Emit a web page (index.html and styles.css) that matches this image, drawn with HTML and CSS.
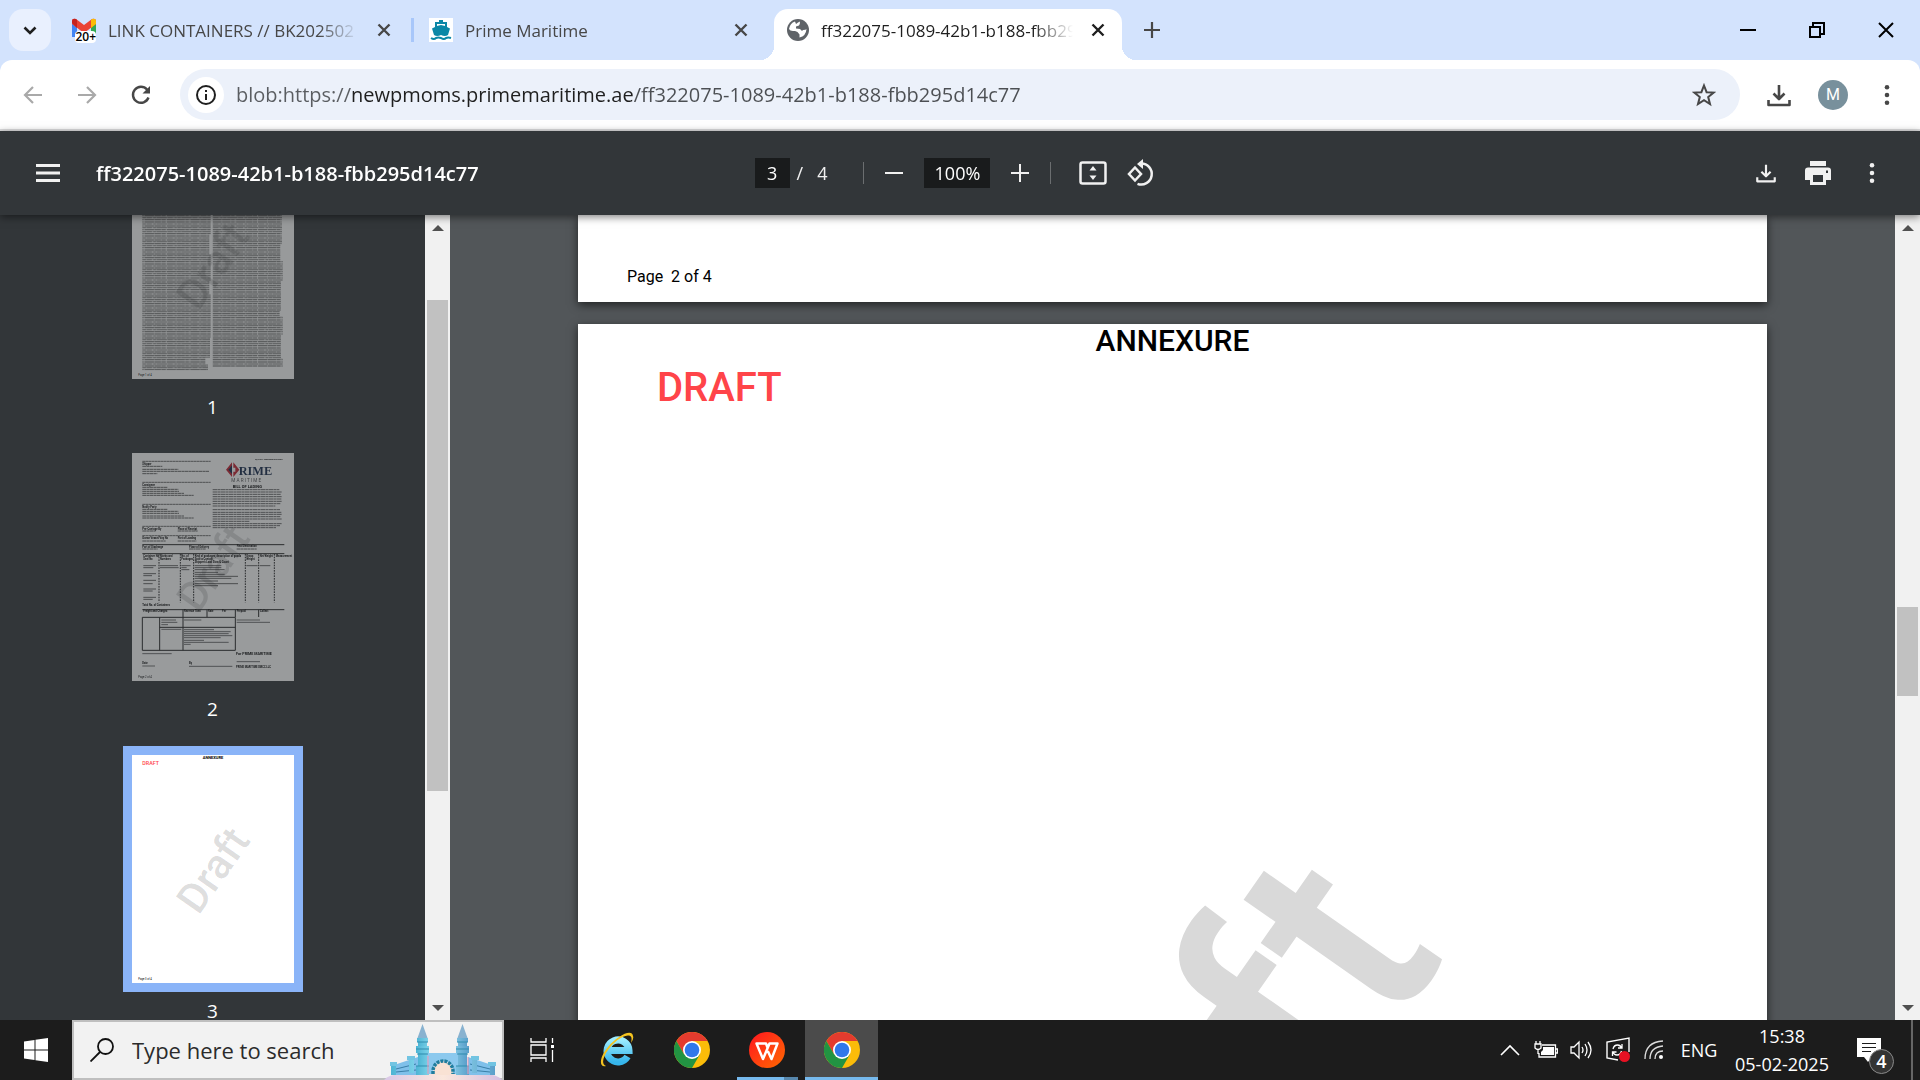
FILE: index.html
```html
<!DOCTYPE html>
<html lang="en">
<head>
<meta charset="utf-8">
<title>ff322075-1089-42b1-b188-fbb295d14c77</title>
<link rel="stylesheet" href="styles.css">
</head>
<body>
<svg class="defs" aria-hidden="true">
  <symbol id="close" viewBox="0 0 24 24"><path d="M6.500 6.500l11 11M17.500 6.500l-11 11" fill="none" stroke="currentColor" stroke-width="2.400"/></symbol>
  <symbol id="download" viewBox="0 0 24 24"><path d="M12 2v14M6.500 10.500L12 16l5.500-5.500M1.500 17v5h21v-5" fill="none" stroke="currentColor" stroke-width="2.600" stroke-linejoin="round"/></symbol>
  <symbol id="dots" viewBox="0 0 24 24"><g fill="currentColor"><circle cx="12" cy="3.500" r="2.500"/><circle cx="12" cy="12" r="2.500"/><circle cx="12" cy="20.500" r="2.500"/></g></symbol>
  <symbol id="chrome" viewBox="0 0 36 36">
    <circle cx="18" cy="18" r="18" fill="#fbbc09"/>
    <path d="M2.400 9A18 18 0 0 1 33.600 9H18L10.200 22.500z" fill="#e33b2e"/>
    <path d="M2.400 9A18 18 0 0 0 18 36l7.800-13.500L18 18l-7.800 4.500z" fill="#229342"/>
    <circle cx="18" cy="18" r="9" fill="#fff"/><circle cx="18" cy="18" r="7.300" fill="#2f78ea"/>
  </symbol>
</svg>

<header>
  <div class="tabstrip">
    <button class="tab-search" aria-label="Search tabs"><svg width="24" height="24" viewBox="0 0 24 24"><path d="M6.500 9.500L12 15l5.500-5.500" fill="none" stroke="#1f1f1f" stroke-width="2.600"/></svg></button>
    <div class="tab tab-first">
      <span class="favicon">
        <svg width="24" height="24" viewBox="0 0 24 24"><path d="M0 5v14h5V8z" fill="#4285f4"/><path d="M24 5v14h-5V8z" fill="#34a853"/><path d="M0 6V3q0-3 4-2l8 6 8-6q4-1 4 2v3l-12 9z" fill="#ea4335"/><path d="M0 5V3q0-3 4-2l1 1v8z" fill="#c5221f"/><path d="M24 6V3q0-3-4-2l-1 1v8z" fill="#fbbc04"/></svg>
        <span class="unread">20+</span>
      </span>
      <span class="tab-title">LINK CONTAINERS // BK202502</span>
      <button class="plain" aria-label="Close tab"><svg width="24" height="24"><use href="#close"/></svg></button>
    </div>
    <div class="tab tab-second">
      <span class="favicon ship"><svg width="24" height="24" viewBox="0 0 24 24"><path d="M10 2h4v2h4v5l3 1.500L19 17q-3 2-7 0-4 2-7 0L3 10.500 6 9V4h4z" fill="#0b87a6"/><path d="M8 6h8v2l-4-1-4 1z" fill="#fff"/><path d="M2 20q3 2 5 0 2-1 5 0 3 2 5 0 2-1 5 0" fill="none" stroke="#0b87a6" stroke-width="2"/></svg></span>
      <span class="tab-title">Prime Maritime</span>
      <button class="plain" aria-label="Close tab"><svg width="24" height="24"><use href="#close"/></svg></button>
    </div>
    <div class="tab tab-active">
      <svg width="22" height="22" viewBox="0 0 22 22"><circle cx="11" cy="11" r="11" fill="#5f6368"/><path d="M2 10q1-6 6-7.500L9 5q2-2 4-2.500 0 3-1 4l-3 1v2l4 .5 2 2 1-1q3 0 3.500-1-.500 7-7 8.500v-3l-2-2.500-2.500-1L6 12q-3 0-4-2z" fill="#fff"/></svg>
      <span class="tab-title">ff322075-1089-42b1-b188-fbb295d14c77</span>
      <button class="plain" aria-label="Close tab"><svg width="24" height="24"><use href="#close"/></svg></button>
    </div>
    <button class="plain new-tab" aria-label="New tab"><svg width="24" height="24" viewBox="0 0 24 24"><path d="M12 4v16M4 12h16" fill="none" stroke="#474747" stroke-width="2.200"/></svg></button>
    <div class="window-buttons">
      <button class="plain" aria-label="Minimize"><svg width="16" height="16"><path d="M0 8h16" stroke="#000" stroke-width="2"/></svg></button>
      <button class="plain" aria-label="Restore"><svg width="16" height="16"><path d="M1 5h10v10H1zM4 4V1h11v11h-3" fill="none" stroke="#000" stroke-width="2"/></svg></button>
      <button class="plain" aria-label="Close"><svg width="16" height="16"><path d="M1 1l14 14M15 1L1 15" stroke="#000" stroke-width="2"/></svg></button>
    </div>
  </div>

  <div class="navbar">
    <button class="plain nav faded" aria-label="Back"><svg width="24" height="24" viewBox="0 0 24 24"><path d="M21 12H4M12 4l-8 8 8 8" fill="none" stroke="currentColor" stroke-width="2.200"/></svg></button>
    <button class="plain nav faded" aria-label="Forward"><svg width="24" height="24" viewBox="0 0 24 24"><path d="M3 12h17M12 4l8 8-8 8" fill="none" stroke="currentColor" stroke-width="2.200"/></svg></button>
    <button class="plain nav" aria-label="Reload"><svg width="24" height="24" viewBox="0 0 24 24"><path d="M19.500 14.500A8 8 0 1 1 18 6.500L20 9" fill="none" stroke="currentColor" stroke-width="2.400"/><path d="M21 3v7.500h-7.500z" fill="currentColor"/></svg></button>
    <div class="omnibox">
      <button class="site-info" aria-label="View site information"><svg width="24" height="24" viewBox="0 0 24 24"><circle cx="12" cy="12" r="9" fill="none" stroke="#1f1f1f" stroke-width="2"/><path d="M12 11v6M12 7v2" stroke="#1f1f1f" stroke-width="2"/></svg></button>
      <input class="url" aria-label="Address" value="blob:https://newpmoms.primemaritime.ae/ff322075-1089-42b1-b188-fbb295d14c77">
      <button class="plain" aria-label="Bookmark this tab"><svg width="24" height="24" viewBox="0 0 24 24"><path d="M12 2.500l2.600 6.700 7 .4-5.400 4.500 1.800 7L12 17.200l-6 3.900 1.800-7-5.400-4.500 7-.4z" fill="none" stroke="#474747" stroke-width="2"/></svg></button>
    </div>
    <button class="plain nav" aria-label="Downloads"><svg width="24" height="24"><use href="#download"/></svg></button>
    <button class="plain nav" aria-label="Profile"><span class="avatar">M</span></button>
    <button class="plain nav" aria-label="Menu"><svg width="24" height="22"><use href="#dots"/></svg></button>
  </div>
</header>

<div class="pdf-toolbar">
  <div class="pdf-start">
    <button class="plain" aria-label="Toggle sidebar"><svg width="24" height="18"><path d="M0 1.500h24M0 9h24M0 16.500h24" stroke="currentColor" stroke-width="3"/></svg></button>
    <span class="pdf-name">ff322075-1089-42b1-b188-fbb295d14c77</span>
  </div>
  <div class="pdf-center">
    <input class="page-number" aria-label="Page number" value="3">
    <span class="slash">/</span><span class="page-count">4</span>
    <span class="rule"></span>
    <button class="plain" aria-label="Zoom out"><svg width="18" height="18"><path d="M0 9h18" stroke="currentColor" stroke-width="2"/></svg></button>
    <input class="zoom-level" aria-label="Zoom level" value="100%">
    <button class="plain" aria-label="Zoom in"><svg width="18" height="18"><path d="M0 9h18M9 0v18" stroke="currentColor" stroke-width="2"/></svg></button>
    <span class="rule"></span>
    <button class="plain fit" aria-label="Fit to page"><svg width="28" height="24" viewBox="0 0 28 24"><rect x="1.500" y="1.500" width="25" height="21" rx="2" fill="none" stroke="currentColor" stroke-width="2.500"/><path d="M10.500 9.500h7L14 5zM10.500 14.500h7L14 19z" fill="currentColor"/></svg></button>
    <button class="plain" aria-label="Rotate"><svg width="28" height="28" viewBox="0 0 28 28"><path d="M8 8.500l6 6.500-6 6.500L2 15zM14 4.500a10.500 10.500 0 1 1-3.500 20.300" fill="none" stroke="currentColor" stroke-width="2.500"/><path d="M10 5l6-5v10z" fill="currentColor"/></svg></button>
  </div>
  <div class="pdf-end">
    <button class="plain" aria-label="Download"><svg width="20" height="22" viewBox="0 0 24 26"><use href="#download" width="24" height="26"/></svg></button>
    <button class="plain" aria-label="Print"><svg width="26" height="24" viewBox="0 0 26 24"><path d="M5 0h16v5H5z" fill="currentColor"/><path fill-rule="evenodd" d="M3 6.500h20q3 0 3 3V19h-5v5H5v-5H0V9.500q0-3 3-3zM8 14v7h10v-7zM21 9.500v2.500h2V9.500z" fill="currentColor"/></svg></button>
    <button class="plain" aria-label="More actions"><svg width="24" height="22"><use href="#dots"/></svg></button>
  </div>
</div>

<div class="viewer">
  <nav class="sidebar" aria-label="Page thumbnails">
    <div class="thumb-list">
      <a class="thumb" href="#page1">
        <svg class="sheet dim" viewBox="0 0 486 684">
          <defs><pattern id="rows" width="137" height="42" patternUnits="userSpaceOnUse"><path d="M0 3h137M0 15h137M0 26h137M0 38h137" stroke="#1c1c1c" stroke-width="3" stroke-dasharray="21 1 13 2 29 1" opacity=".7"/><path d="M0 9h137M0 20h137M0 32h137" stroke="#1c1c1c" stroke-width="3" stroke-dasharray="9 1 33 1 17 2" opacity=".6"/></pattern></defs>
          <rect width="486" height="684" fill="#fff"/>
          <path d="M31 20H236V250h-4v60h4v80h-4v40h4v130h-2v60h-14v20h8v18H31zM242 20H450V280h-5v50h7v60h-5v90h-4v16h9v56h-5v70h5v26H242z" fill="url(#rows)"/>
          <text x="19" y="675" font-size="8">Page  1 of 4</text>
          <text class="mark" transform="translate(243 345) rotate(-55)">Draft</text>
        </svg>
        <span>1</span>
      </a>
      <a class="thumb" href="#page2">
        <svg class="sheet dim" viewBox="0 0 486 684">
          <rect width="486" height="684" fill="#fff"/>
          <g stroke="#222" fill="none">
            <path d="M31 25h205M31 88h205M31 154h205M31 220h205M31 248h205" stroke-width="2" stroke-dasharray="8 1"/>
            <path d="M31 40h60M31 49h108M31 55h200M31 62h45M31 103h76M31 109h108M31 115h110M31 121h126M31 127h154M31 169h76M31 175h108M31 181h110M31 189h126M31 195h154M31 234h40M137 234h60M31 264h70M137 264h56M31 288h46M171 288h50M314 288h60" stroke-width="3" stroke-dasharray="12 1 7 1" opacity=".7"/>
            <path d="M242 110h200M242 117h208M242 124h204M242 131h208M242 138h206M242 145h208M242 152h203M242 159h188M242 170h202M242 178h206M242 184h208M242 191h203M242 198h208M242 205h110M242 212h208M242 218h202M242 224h190" stroke-width="3" stroke-dasharray="14 1 8 1" opacity=".68"/>
            <path d="M31 275h426M31 302h426M31 470h426" stroke-width="3"/>
            <path d="M81 303v145M145 303v145M185 303v145M340 303v145M380 303v145M427 303v145" stroke-width="3" stroke-dasharray="5 3"/>
            <path d="M31 493h279v99H31zM83 493v99M153 470v122M83 523h227M225 470v22M310 470v22M380 470v22" stroke-width="3"/>
            <path d="M34 338h38M34 344h30M34 362h38M34 368h26M34 382h38M34 392h28M34 408h38M34 414h28M34 433h38M34 439h28M84 338h54M84 344h56M148 338h28M148 344h16M148 350h24M188 338h80M188 344h80M188 350h90M188 358h70M188 364h90M188 370h130M188 376h110M188 384h70M188 392h130M188 398h70M343 338h34M383 338h32" stroke-width="3" opacity=".7"/>
            <path d="M156 530h90M156 536h140M156 542h134M156 548h145M156 554h110M156 562h60M156 568h134M156 574h20M88 501h44M88 508h48M88 515h20M88 529h60M156 501h52M314 501h70M314 508h100M31 602h88M31 639h38M171 640h130M314 626h70" stroke-width="3" opacity=".65"/>
          </g>
          <g font-size="8" font-weight="700">
            <text x="370" y="21" font-size="7">B/L No. PMLDXBJEA2025</text>
            <text x="31" y="37">Shipper</text><text x="31" y="98">Consignee</text><text x="31" y="165">Notify Party</text>
            <text x="31" y="231">Pre-Carriage By</text><text x="137" y="231">Place of Receipt</text>
            <text x="31" y="258">Ocean Vessel/Voy No</text><text x="137" y="258">Port of Loading</text>
            <text x="31" y="285">Port of Discharge</text><text x="171" y="285">Place of Delivery</text><text x="314" y="283">Final Destination</text>
            <text x="34" y="312">Container No</text><text x="34" y="321">Seal No</text><text x="84" y="312">Marks and</text><text x="84" y="321">Numbers</text>
            <text x="148" y="312">No. of</text><text x="148" y="321">Packages</text><text x="188" y="312">Kind of packages, description of goods</text><text x="188" y="321">Said to Contain</text><text x="188" y="330">Shipper's Load Stow &amp; Count</text>
            <text x="343" y="312">Gross</text><text x="343" y="321">Weight</text><text x="383" y="312">Net Weight</text><text x="431" y="312">Measurement</text>
            <text x="31" y="459">Total No. of Containers</text><text x="34" y="478">Freight and Charges</text>
            <text x="156" y="478">Revenue Tons</text><text x="228" y="478">Rate</text><text x="270" y="478">Per</text><text x="314" y="478">Prepaid</text><text x="384" y="478">Collect</text>
            <text x="312" y="606" font-size="11">For PRIME MARITIME</text>
            <text x="31" y="634">Date</text><text x="171" y="634">By</text><text x="312" y="645">PRIME MARITIME DMCC LLC</text>
            <text x="302" y="105" font-size="12">BILL OF LADING</text>
          </g>
          <path d="M282 50l18-22v44zM322 50l-18 22V56h6V44h-6V28z" fill="#c4202f"/><path d="M289 50l11-13v26z" fill="#14284a"/>
          <text x="320" y="67" font-family="Liberation Serif" font-weight="700" font-size="37" fill="#14284a">RIME</text>
          <text x="298" y="88" font-size="14" fill="#555">M A R I T I M E</text>
          <text x="19" y="675" font-size="8">Page  2 of 4</text>
          <text class="mark" transform="translate(243 345) rotate(-55)">Draft</text>
        </svg>
        <span>2</span>
      </a>
      <a class="thumb current" href="#page3">
        <svg class="sheet" viewBox="0 0 486 684">
          <rect width="486" height="684" fill="#fff"/>
          <text x="243" y="12" text-anchor="middle" font-size="12" font-weight="700">ANNEXURE</text>
          <text x="31" y="30" font-size="16" font-weight="500" fill="#ff4449">DRAFT</text>
          <text x="19" y="675" font-size="8">Page  3 of 4</text>
          <text class="mark" transform="translate(243 345) rotate(-55)">Draft</text>
        </svg>
        <span>3</span>
      </a>
    </div>
  </nav>
  <div class="scrollbar" aria-hidden="true"><i class="up"></i><div class="track side-track"><b></b></div><i class="down"></i></div>
  <main class="document">
    <section class="page page-tail" id="page2"><p>Page  2 of 4</p></section>
    <section class="page page-full" id="page3">
      <h1>ANNEXURE</h1>
      <h2>DRAFT</h2>
      <div class="watermark">Draft</div>
    </section>
  </main>
  <div class="scrollbar" aria-hidden="true"><i class="up"></i><div class="track main-track"><b></b></div><i class="down"></i></div>
</div>

<footer class="taskbar">
  <button class="plain start" aria-label="Start"><svg width="24" height="24" viewBox="0 0 24 24"><path d="M0 3.500l10.500-1.500v9.500H0zM11.500 1.800L24 0v11.500H11.500zM0 12.500h10.500V22L0 20.500zM11.500 12.500H24V24l-12.500-1.800z" fill="#fff"/></svg></button>
  <div class="search">
    <svg width="24" height="24" viewBox="0 0 24 24"><circle cx="15.500" cy="8.500" r="7.500" fill="none" stroke="#111" stroke-width="1.800"/><path d="M10 14L0.500 23.500" stroke="#111" stroke-width="1.800"/></svg>
    <input aria-label="Search" placeholder="Type here to search">
    <svg class="castle" width="118" height="56" viewBox="0 0 118 56">
      <defs>
        <linearGradient id="stone"><stop offset="0" stop-color="#4db4d4"/><stop offset=".45" stop-color="#a5ecfa"/><stop offset="1" stop-color="#5a9fca"/></linearGradient>
        <linearGradient id="glow"><stop offset="0" stop-color="#d9c8e8"/><stop offset=".5" stop-color="#fbe7dc"/><stop offset="1" stop-color="#d5bfe2"/></linearGradient>
      </defs>
      <path d="M0 56q4-6 20-6h78q16 0 20 6z" fill="url(#glow)"/>
      <path d="M10 51V41l24-8v18zM108 51V41l-24-8v18z" fill="#7fc0ea"/><path d="M12 45l20-5M12 48l20-2M106 45l-20-5M106 48l-20-2" stroke="#397fa8" stroke-width="1"/>
      <path d="M40 29h38v21H40z" fill="#8cc9ee"/>
      <path d="M49 51v-4a10 10 0 0 1 20 0v4z" fill="#f9e2d4"/><path d="M49 50v-3a10 10 0 0 1 20 0v3" fill="none" stroke="#217d9d" stroke-width="3.500" stroke-dasharray="3 1"/>
      <path d="M7 41h5v10H7zM25 35h5v14h-5zM88 35h5v14h-5zM106 41h5v10h-5z" fill="url(#stone)"/><path d="M6 38h7v4H6zM23 32h8v4h-8zM87 32h8v4h-8zM104 38h8v4h-8z" fill="#72c4e2"/>
      <path d="M34 18h9v32h-9zM74 18h9v32h-9z" fill="url(#stone)"/>
      <path d="M38.500 0l5 14h-10zM78.500 0l5 14h-10z" fill="#88b2d0"/>
      <path d="M33 14h11v4H33zM73 14h11v4H73zM32 22h13v7H32zM72 22h13v7H72zM32 42h13v9H32zM72 42h13v9H72z" fill="url(#stone)"/>
      <path d="M33 18h11M73 18h11M32 25h13M72 25h13M33 30h11M73 30h11M32 42h13M72 42h13" stroke="#318dae" stroke-width="1"/>
      <path d="M44 32v18M84 33v17" stroke="#e69ab8" stroke-width="1.500" opacity=".7"/>
    </svg>
  </div>
  <button class="plain app" aria-label="Task view"><svg width="24" height="24"><path d="M1 0v4h15V0M1 24v-4h15v4M1 7h15v10H1zM22.500 0v5M22.500 12v12" fill="none" stroke="#fff" stroke-width="1.300"/><path d="M21 7h3v3h-3z" fill="#fff"/></svg></button>
  <button class="plain app" aria-label="Internet Explorer"><svg width="36" height="36" viewBox="0 0 36 36"><defs><linearGradient id="ie" x2="0" y2="1"><stop offset="0" stop-color="#9cecff"/><stop offset="1" stop-color="#36b5eb"/></linearGradient></defs><path d="M28.500 24.500A11 11 0 1 1 30 18.500H11" fill="none" stroke="url(#ie)" stroke-width="7"/><path d="M7 34C-1 36 1 24 9 15 18 4 33-4 34 4q1 3-2 7 2-8-3-7.500C22 4 14 11 9 18 4 25 2 32 7 34z" fill="#f4c320"/></svg></button>
  <button class="plain app" aria-label="Google Chrome"><svg width="36" height="36"><use href="#chrome"/></svg></button>
  <button class="plain app running" aria-label="WPS Office"><svg width="36" height="36" viewBox="0 0 36 36"><defs><linearGradient id="wps" x2="1" y2="1"><stop offset="0" stop-color="#ff1520"/><stop offset="1" stop-color="#ff6a00"/></linearGradient></defs><circle cx="18" cy="18" r="18" fill="url(#wps)"/><path d="M12 11.500H7.500L14 27l6.500-15.500H28.500L22.500 27 18.800 19M11 11.500h6l1.500 4" fill="none" stroke="#fff" stroke-width="2.500" stroke-linejoin="round"/></svg></button>
  <button class="plain app focused" aria-label="Google Chrome, active"><svg width="36" height="36"><use href="#chrome"/></svg></button>
  <div class="tray">
    <button class="plain" aria-label="Show hidden icons"><svg width="20" height="12"><path d="M1 11l9-9 9 9" fill="none" stroke="#fff" stroke-width="1.600"/></svg></button>
    <button class="plain" aria-label="Battery"><svg width="24" height="18"><path d="M8 4h13.500v12H5v-4M22 8h1.500v4H22M1 3h6v4q-3 3-6 0zM2 0v3M6 0v3M4 9v4" fill="none" stroke="#fff" stroke-width="1.300"/><path d="M9 6h11v8H7v-3l2-2z" fill="#fff"/></svg></button>
    <button class="plain" aria-label="Volume"><svg width="24" height="20"><path d="M1 7h3l5-5v16l-5-5H1zM12 7q2 3 0 6M15 4q4 6 0 12M18 2q6 8 0 16" fill="none" stroke="#fff" stroke-width="1.300"/></svg></button>
    <button class="plain" aria-label="Update"><svg width="24" height="26"><path d="M12 23L1 21V5l22-4v14" fill="none" stroke="#fff" stroke-width="1.400"/><path d="M7 12q1-4 4.500-4 3 0 4 3M16 7v4h-4M15.500 14q-1 4-4.500 4-3 0-4-3M6.500 19v-4h4" fill="none" stroke="#fff" stroke-width="1.300"/><circle cx="18.500" cy="19.500" r="5.500" fill="#e81123"/></svg></button>
    <button class="plain" aria-label="Network"><svg width="20" height="20"><path d="M1 19Q1 2 19 1M6 19Q6 7 19 6M11 19q0-8 8-8" fill="none" stroke="#ddd" stroke-width="1.300"/><circle cx="17" cy="17" r="2" fill="#fff"/></svg></button>
    <button class="plain lang">ENG</button>
    <button class="plain clock"><span>15:38</span><span>05-02-2025</span></button>
    <button class="plain notices" aria-label="4 notifications"><svg width="24" height="24"><path d="M0 0h24v19H15l-4 5-4-5H0z" fill="#fff"/><path d="M5 5.500h14M5 9.500h14M5 13.500h9" stroke="#1c1c1c" stroke-width="1.200"/></svg><span class="count">4</span></button>
    <span class="peek"></span>
  </div>
</footer>
</body>
</html>
```
FILE: styles.css
```css
* { box-sizing: border-box; }
body {
  margin: 0;
  height: 100vh;
  display: flex;
  flex-direction: column;
  overflow: hidden;
  background: #525659;
  font-family: "Open Sans", "Noto Sans", sans-serif;
  font-size: 18px;
}
.defs { position: absolute; width: 0; height: 0; }
svg { display: block; flex: none; }
input, button { font: inherit; color: inherit; }
input { border: 0; outline: 0; background: none; padding: 0; min-width: 0; }
.plain {
  display: flex;
  align-items: center;
  justify-content: center;
  border: 0;
  padding: 0;
  background: none;
}
header { flex: none; background: #d3e3fd; color: #474747; }

/* tab strip */
.tabstrip { display: flex; height: 60px; padding-left: 9px; align-items: flex-end; }
.tab-search {
  align-self: center;
  display: grid;
  place-items: center;
  width: 42px;
  height: 42px;
  border: 0;
  border-radius: 14px;
  padding: 0;
  background: #e9f0fe;
}
.tab { position: relative; display: flex; align-items: center; height: 51px; padding-bottom: 9px; }
.tab-title {
  flex: 1;
  margin: 0 13px 0 12px;
  padding-top: 2px;
  overflow: hidden;
  white-space: nowrap;
  font-size: 17px;
  line-height: 24px;
  -webkit-mask-image: linear-gradient(to left, transparent, #000 40px);
  mask-image: linear-gradient(to left, transparent, #000 40px);
}
.tab-first { width: 360px; padding-left: 21px; padding-right: 15px; }
.tab-second { width: 363px; padding-left: 18px; padding-right: 21px; }
.tab-second::before { content: ""; width: 3px; height: 24px; margin-left: -18px; margin-right: 15px; background: #a8c7fa; }
.tab-active {
  width: 348px;
  padding-left: 13px;
  padding-right: 12px;
  border-radius: 14px 14px 0 0;
  background: #fff;
  color: #1f1f1f;
}
.tab-active::before, .tab-active::after {
  content: "";
  position: absolute;
  bottom: 0;
  width: 14px;
  height: 14px;
}
.tab-active::before { right: 100%; background: radial-gradient(circle at 0 0, transparent 14px, #fff 14px); }
.tab-active::after { left: 100%; background: radial-gradient(circle at 100% 0, transparent 14px, #fff 14px); }
.favicon { position: relative; width: 24px; height: 24px; }
.ship { background: #fff; }
.unread {
  position: absolute;
  right: 0;
  bottom: -1px;
  border-radius: 4px;
  background: #fff;
  color: #000;
  font-size: 12px;
  font-weight: 600;
  line-height: 12px;
}
.new-tab { height: 60px; margin-left: 18px; }
.window-buttons { display: flex; height: 60px; margin-left: auto; }
.window-buttons button { width: 69px; }

/* address row */
.navbar {
  display: flex;
  align-items: center;
  height: 71px;
  padding: 0 6px;
  border-bottom: 2px solid #dfdfe0;
  border-radius: 12px 12px 0 0;
  background: #fff;
}
.nav { width: 54px; height: 48px; }
.faded { color: #a9a9a9; }
.omnibox {
  flex: 1;
  display: flex;
  align-items: center;
  height: 51px;
  margin: 0 12px;
  padding: 0 24px 0 8px;
  border-radius: 26px;
  background: #ecf1fa;
}
.site-info {
  display: grid;
  place-items: center;
  width: 36px;
  height: 36px;
  border: 0;
  border-radius: 50%;
  padding: 0;
  background: #fff;
}
.url {
  flex: 1;
  height: 36px;
  margin-left: 12px;
  font-size: 20px;
  background: linear-gradient(to right, #5a5d61 115px, #1f1f1f 115px, #1f1f1f 397px, #4c4f53 397px);
  -webkit-background-clip: text;
  background-clip: text;
  color: transparent;
}
.avatar {
  width: 30px;
  height: 30px;
  border-radius: 50%;
  background: #78909c;
  color: #fff;
  font: 16px/30px Roboto, sans-serif;
}

/* viewer toolbar */
.pdf-toolbar {
  position: relative;
  z-index: 1;
  flex: none;
  display: grid;
  grid-template-columns: 1fr auto 1fr;
  align-items: center;
  height: 84px;
  padding: 0 36px;
  background: #323639;
  color: #f1f1f1;
  box-shadow: 0 2px 8px rgba(0, 0, 0, .5);
}
.pdf-start, .pdf-center, .pdf-end { display: flex; align-items: center; }
.pdf-start { gap: 36px; }
.pdf-center { margin-right: 10px; }
.pdf-name { font-size: 20px; font-weight: 600; white-space: nowrap; color: #fff; }
.page-number, .zoom-level { height: 30px; background: #191b1c; text-align: center; color: #fff; }
.page-number { width: 35px; }
.zoom-level { width: 66px; margin: 0 21px; }
.slash { margin: 0 14px 0 7px; }
.rule { width: 1px; height: 22px; margin: 0 21px 0 36px; background: #6b6e70; }
.zoom-level ~ .rule { margin: 0 28px 0 21px; }
.fit { margin-right: 20px; }
.pdf-end { justify-content: flex-end; gap: 29px; }

/* viewer body */
.viewer { flex: 1; display: flex; min-height: 0; }
.sidebar { flex: none; width: 425px; overflow: hidden; background: #323639; }
.thumb-list {
  display: flex;
  flex-direction: column;
  align-items: center;
  gap: 18px;
  margin-top: -73px;
}
.thumb { color: #fff; text-align: center; text-decoration: none; }
.thumb span { display: block; font-size: 19px; line-height: 38px; }
.sheet { width: 180px; height: 246px; border: 9px solid transparent; font-family: Roboto, sans-serif; }
.dim { opacity: .5; }
.current .sheet { border-color: #8ab4f8; }
.mark { font-size: 125px; font-weight: 500; text-anchor: middle; dominant-baseline: central; fill: #000; fill-opacity: .15; }
.scrollbar {
  flex: none;
  display: flex;
  flex-direction: column;
  align-items: center;
  justify-content: space-between;
  width: 25px;
  padding: 10px 0 9px;
  background: #f1f1f1;
}
.scrollbar i { border: 6px solid transparent; }
.scrollbar .up { border-top: 0; border-bottom-color: #505050; }
.scrollbar .down { border-bottom: 0; border-top-color: #505050; }
.track { flex: 1; width: 21px; display: flex; flex-direction: column; }
.track b { flex: 1; background: #c1c1c1; }
.side-track { padding: 69px 0 214px; }
.main-track { padding: 376px 0 309px; }
.document {
  flex: 1;
  display: flex;
  flex-direction: column;
  align-items: center;
  gap: 22px;
  overflow: hidden;
  font-family: Roboto, sans-serif;
}
.page {
  position: relative;
  flex: none;
  width: 100%;
  max-width: 1189px;
  background: #fff;
  color: #000;
  box-shadow: 0 3px 9px rgba(0, 0, 0, .6);
}
.page p { margin: 0; padding: 51px 49px 14px; font-size: 16px; line-height: 22px; white-space: pre; }
.page-full { aspect-ratio: 1189 / 1673; }
.page h1 { margin: 0; font-size: 30px; font-weight: 500; line-height: 34px; text-align: center; }
.page h2 { margin: 0; padding: 5px 79px; font-size: 40px; font-weight: 500; line-height: 50px; color: #ff4449; }
.watermark {
  position: absolute;
  inset: 6px 0 -6px;
  display: grid;
  place-items: center;
  font-size: 300px;
  font-weight: 500;
  line-height: 1;
  color: #d9d9d9;
  transform: rotate(-55deg);
}

/* taskbar */
.taskbar { flex: none; display: flex; height: 60px; background: #1c1c1c; color: #fff; }
.start { width: 72px; }
.search {
  position: relative;
  display: flex;
  align-items: center;
  width: 432px;
  padding-left: 16px;
  border: 2px solid #bfbfbf;
  background: #f2f2f2;
}
.search input { flex: 1; margin-left: 18px; font-size: 22px; color: #2b2b2b; }
.search input::placeholder { color: #2b2b2b; opacity: 1; }
.castle { position: absolute; right: 0; bottom: -2px; }
.app { position: relative; width: 75px; }
.running::after {
  content: "";
  position: absolute;
  inset: auto 6px 0 8px;
  height: 3px;
  background: linear-gradient(to right, #76b9ed 47px, #5787ad 47px);
}
.focused { width: 73px; margin-left: 1px; background: #4b4b4b; box-shadow: inset 0 -3px #76b9ed; }
.tray { display: flex; margin-left: auto; }
.tray button { width: 36px; }
.tray .lang { width: 54px; }
.tray .clock { width: 112px; flex-direction: column; line-height: 28px; }
.tray .notices { position: relative; width: 62px; }
.count {
  position: absolute;
  left: 31px;
  top: 29px;
  width: 25px;
  height: 25px;
  border: 1px solid #8a8a8a;
  border-radius: 50%;
  background: #333;
  line-height: 23px;
  font-size: 18px;
  font-weight: 600;
}
.peek { width: 9px; margin-left: 11px; border-left: 2px solid #666; }
```
